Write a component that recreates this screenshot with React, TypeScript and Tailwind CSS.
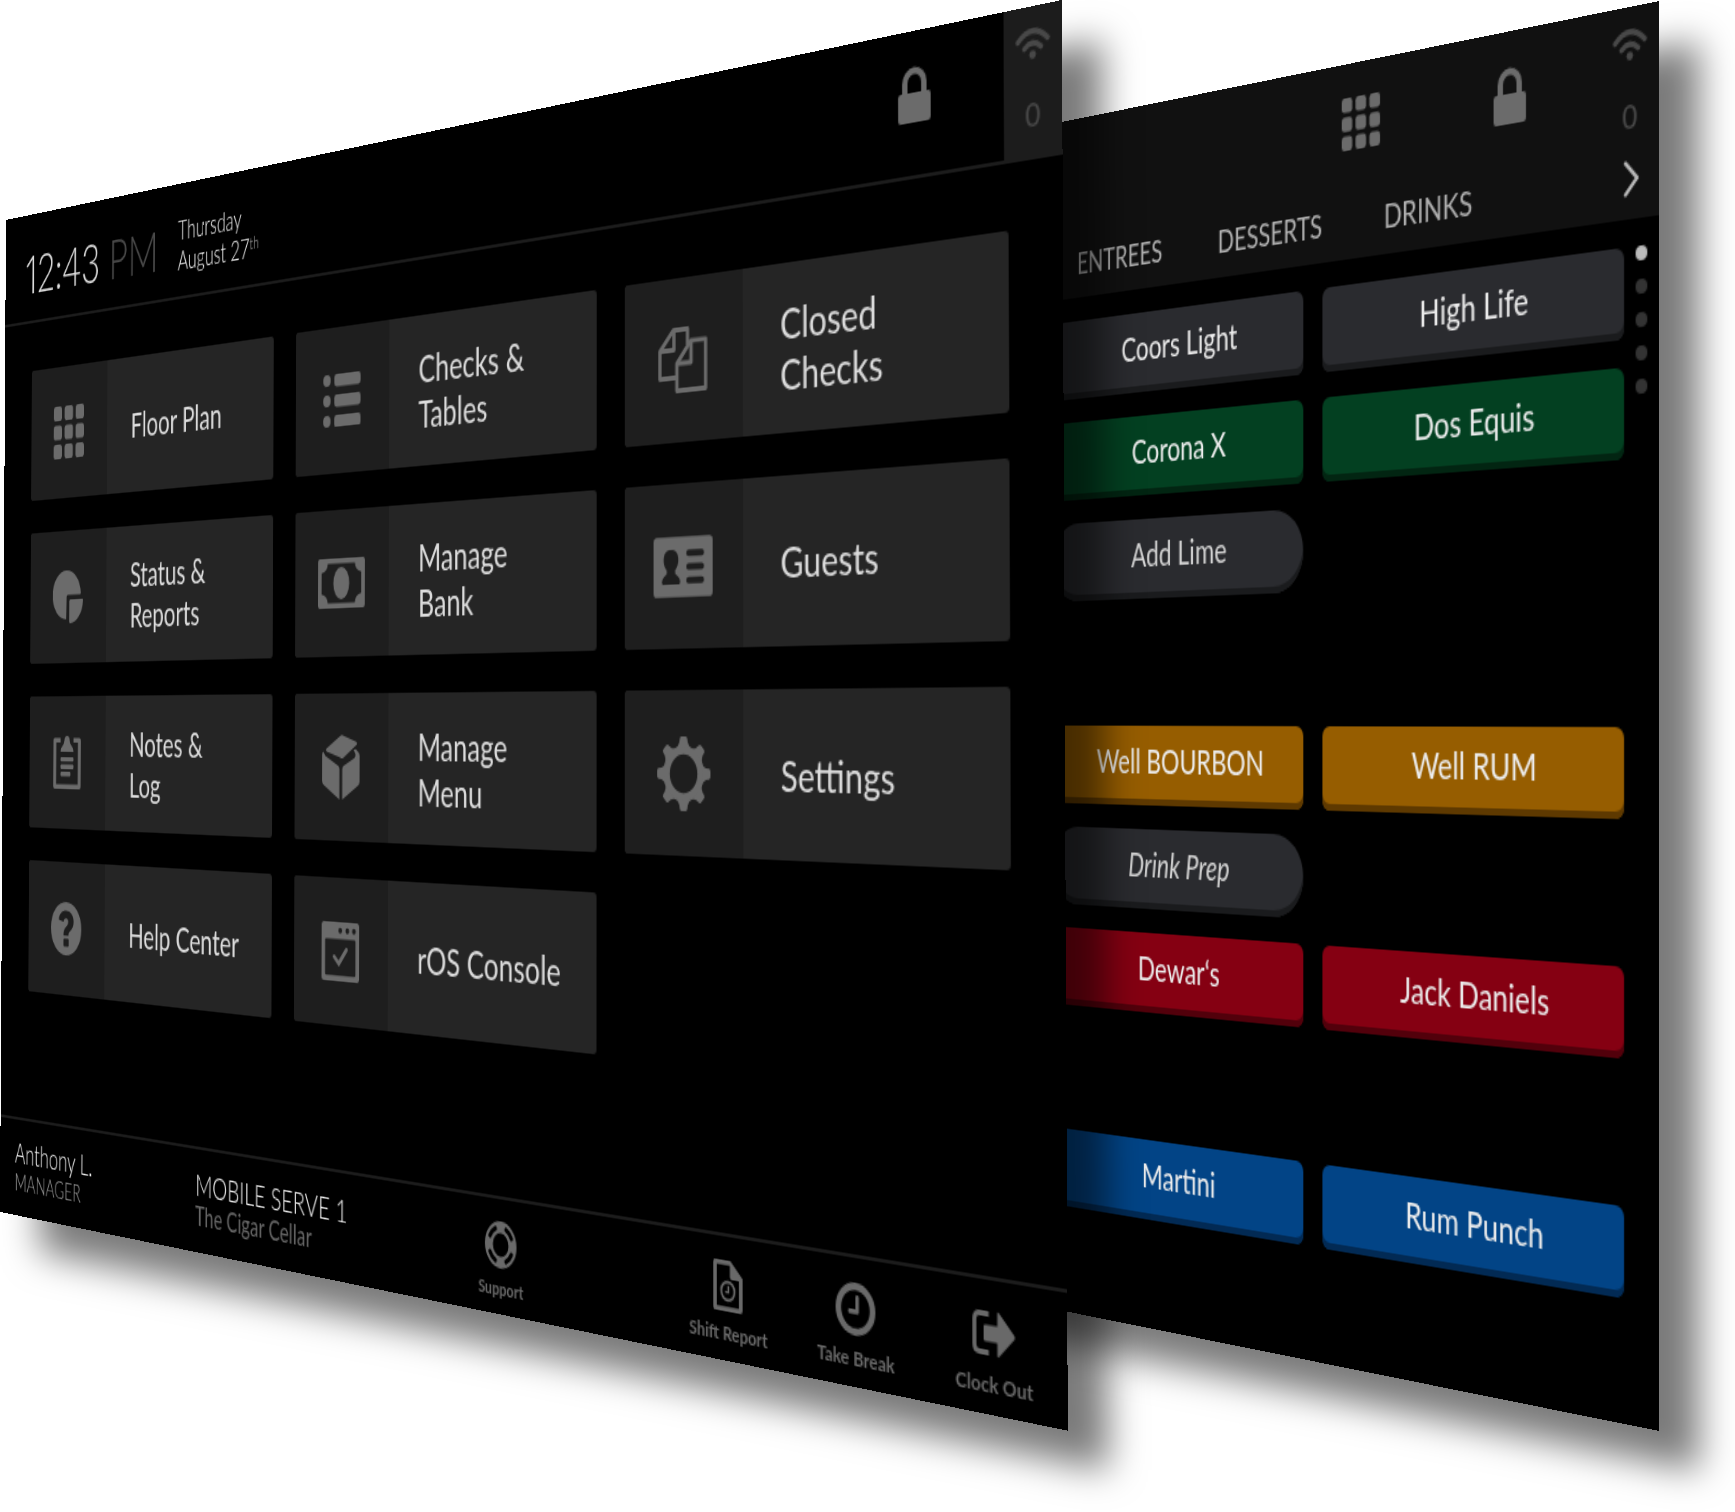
import { useEffect, useState } from "react";
import type { ReactNode } from "react";

type Point = [number, number];
type Quad = [Point, Point, Point, Point];

const DESIGN_WIDTH = 1735;
const PANEL_WIDTH = 1024;
const PANEL_HEIGHT = 768;

// Corners in the order: top left, top right, bottom right, bottom left.
const HOME_QUAD: Quad = [[6, 220], [1062, 0], [1068, 1431], [0, 1212]];
const MENU_QUAD: Quad = [[603, 215], [1659, 1], [1659, 1431], [603, 1218]];

/** Perspective matrix that maps a flat panel onto a quad on the page. */
function perspectiveMatrix(quad: Quad, scale: number): string {
  const [[x0, y0], [x1, y1], [x2, y2], [x3, y3]] = quad.map(([x, y]) => [x * scale, y * scale]);
  const dx1 = x1 - x2;
  const dx2 = x3 - x2;
  const dy1 = y1 - y2;
  const dy2 = y3 - y2;
  const sx = x0 - x1 + x2 - x3;
  const sy = y0 - y1 + y2 - y3;
  const den = dx1 * dy2 - dx2 * dy1;
  const g = (sx * dy2 - dx2 * sy) / den;
  const h = (dx1 * sy - sx * dy1) / den;
  const w = PANEL_WIDTH;
  const t = PANEL_HEIGHT;
  const m = [
    (x1 - x0 + g * x1) / w, (y1 - y0 + g * y1) / w, 0, g / w,
    (x3 - x0 + h * x3) / t, (y3 - y0 + h * y3) / t, 0, h / t,
    0, 0, 1, 0,
    x0, y0, 0, 1,
  ];
  return `matrix3d(${m.join(",")})`;
}

function usePageScale(): number {
  const [scale, setScale] = useState(() => window.innerWidth / DESIGN_WIDTH);
  useEffect(() => {
    const update = () => setScale(window.innerWidth / DESIGN_WIDTH);
    window.addEventListener("resize", update);
    return () => window.removeEventListener("resize", update);
  }, []);
  return scale;
}

/* ---------- icons ---------- */

function Icon({ w, h, className, children }: { w: number; h: number; className?: string; children: ReactNode }) {
  return (
    <svg width={w} height={h} viewBox={`0 0 ${w} ${h}`} fill="currentColor" aria-hidden="true" className={className}>
      {children}
    </svg>
  );
}

function GridIcon({ size = 40 }: { size?: number }) {
  return (
    <svg width={size} height={size} viewBox="0 0 40 40" fill="currentColor" aria-hidden="true">
      {[0, 14.5, 29].map((y) =>
        [0, 14.5, 29].map((x) => <rect key={`${x}-${y}`} x={x} y={y} width="11" height="11" rx="2.8" />),
      )}
    </svg>
  );
}

const ListIcon = () => (
  <Icon w={40} h={36}>
    {[0, 14, 28].map((y) => (
      <g key={y}>
        <circle cx="4" cy={y + 4} r="4" />
        <rect x="12" y={y} width="28" height="8.4" rx="2.4" />
      </g>
    ))}
  </Icon>
);

const CopyIcon = () => (
  <Icon w={42} h={40}>
    <g fill="none" stroke="currentColor" strokeWidth="2.8" strokeLinejoin="round">
      <path d="M15 30.5H1.5V13.5L13 1.5H25V11" />
      <path d="M13.5 1.5V13.5H1.5" />
      <path d="M16 22L28 8.8H40.2V38.5H16Z" />
      <path d="M28 8.8V22H16" />
    </g>
  </Icon>
);

const PieIcon = () => (
  <Icon w={40} h={40}>
    <path d="M18.5 0A18.5 18.5 0 1 0 18 37L18.5 20Q18.5 18.5 20 18.5H36Q37 18.5 36.9 17A18.5 18.5 0 0 0 18.5 0Z" />
    <path d="M23.5 22H39.5Q40 22 39.9 23.5A18 18 0 0 1 23.5 40Q22 40 22 39V23.5Q22 22 23.5 22Z" />
  </Icon>
);

const BanknoteIcon = () => (
  <Icon w={50} h={34}>
    <path
      fillRule="evenodd"
      d="M2 0H48Q50 0 50 2V32Q50 34 48 34H2Q0 34 0 32V2Q0 0 2 0ZM10.5 3.5Q10 9 3.8 9.8V24.2Q10 25 10.5 30.5H39.5Q40 25 46.2 24.2V9.8Q40 9 39.5 3.5Z"
    />
    <ellipse cx="25" cy="17" rx="8.5" ry="11" />
  </Icon>
);

const GuestIcon = () => (
  <svg width="50" height="37" viewBox="0 0 52 38" fill="currentColor" aria-hidden="true">
    <path
      fillRule="evenodd"
      d="M3 0H49Q52 0 52 3V35Q52 38 49 38H3Q0 38 0 35V3Q0 0 3 0Z
      M15.5 8C11.5 8 9 10.5 9 14.2C9 17.5 10.3 19.5 11.8 21V23C11.8 24 7.5 25 7.5 28.3C7.5 29.6 8.3 30 9.5 30H21.5C22.8 30 23.6 29.6 23.6 28.3C23.6 25 19.2 24 19.2 23V21C20.7 19.5 22 17.5 22 14.2C22 10.5 19.5 8 15.5 8Z
      M31 8.3H42.5Q44.5 8.3 44.5 10.4T42.5 12.5H31Q29 12.5 29 10.4T31 8.3Z
      M31 17H42.5Q44.5 17 44.5 19.1T42.5 21.2H31Q29 21.2 29 19.1T31 17Z
      M31 25.5H42.5Q44.5 25.5 44.5 27.6T42.5 29.7H31Q29 29.7 29 27.6T31 25.5Z"
    />
  </svg>
);

const ClipboardIcon = () => (
  <Icon w={36} h={40}>
    <path d="M9.5 1.5V5H3.8V36.5H32.2V5H26.5V1.5H34Q36 1.5 36 3.5V38Q36 40 34 40H2Q0 40 0 38V3.5Q0 1.5 2 1.5Z" />
    <path d="M18 0Q21.5 0 21.5 3.5Q22 7 24.5 8Q26.5 9 26.5 12H9.5Q9.5 9 11.5 8Q14 7 14.5 3.5Q14.5 0 18 0Z" />
    <rect x="9.5" y="16" width="17" height="3.2" rx="1" />
    <rect x="9.5" y="21.5" width="17" height="3.4" rx="1" />
    <rect x="9.5" y="27" width="13" height="3.4" rx="1" />
  </Icon>
);

const BoxIcon = () => (
  <Icon w={40} h={44}>
    <path d="M20 .5Q21.5 0 23 .7L36.5 4.8Q38 5.6 36.8 6.8L23 15.6Q21.2 16.6 19.4 15.6L4.8 11.6Q3 10.8 4.6 9.6Z" />
    <path d="M1.2 11.5L3.4 14.6L17 21Q18.6 21.8 18.6 23.6V44L2 34.6Q0 33.4 0 31.4V14Q0 12 1.2 11.5Z" />
    <path d="M33.4 10.3L36 9.7L39 12Q40 13 40 14.6V31.4Q40 33.4 38 34.6L21.6 44V23.6Q21.6 21.8 23.2 21L34 16Q36.6 14.4 35 12Z" />
  </Icon>
);

const GearIcon = () => (
  <svg width="45" height="45" viewBox="0 0 46 46" fill="currentColor" aria-hidden="true">
    {[0, 45, 90, 135, 180, 225, 270, 315].map((a) => (
      <path
        key={a}
        transform={`rotate(${a} 23 23)`}
        d="M19.8 1.2Q20.1 0 21.4 0H24.6Q25.9 0 26.2 1.2L26.7 3.8Q27.4 6.4 31 7.8H15Q18.6 6.4 19.3 3.8Z"
      />
    ))}
    <path fillRule="evenodd" d="M23 6.2A16.8 16.8 0 1 0 23 39.8A16.8 16.8 0 1 0 23 6.2ZM23 11.1A11.9 11.9 0 1 1 23 34.9A11.9 11.9 0 1 1 23 11.1Z" />
  </svg>
);

const HelpIcon = () => (
  <Icon w={40} h={40}>
    <path
      fillRule="evenodd"
      d="M20 0A20 20 0 1 0 20 40A20 20 0 1 0 20 0ZM10.4 13.6C10.8 9 14.6 6.4 20 6.4C25.8 6.4 29.8 9.6 29.8 14.4C29.8 17.8 28 19.8 25.6 21.4C23.8 22.6 23.2 23.4 23.2 25.2H16.6C16.4 21.8 17.8 20 20.2 18.4C22 17.2 22.8 16.4 22.8 14.8C22.8 13.2 21.8 12.2 20 12.2C18 12.2 16.8 13.2 16.6 15Z
      M17.6 27.4H22.6Q23.6 27.4 23.6 28.4V32.4Q23.6 33.4 22.6 33.4H17.6Q16.6 33.4 16.6 32.4V28.4Q16.6 27.4 17.6 27.4Z"
    />
  </Icon>
);

const ConsoleIcon = () => (
  <Icon w={40} h={40}>
    <path
      fillRule="evenodd"
      d="M2.5 0H37.5Q40 0 40 2.5V37.5Q40 40 37.5 40H2.5Q0 40 0 37.5V2.5Q0 0 2.5 0ZM5 11.4Q3.8 11.4 3.8 12.6V35Q3.8 36.2 5 36.2H35Q36.2 36.2 36.2 35V12.6Q36.2 11.4 35 11.4Z
      M20 3.8A2 2 0 1 0 20 7.8A2 2 0 1 0 20 3.8ZM27.5 3.8A2 2 0 1 0 27.5 7.8A2 2 0 1 0 27.5 3.8ZM34.5 3.8A2 2 0 1 0 34.5 7.8A2 2 0 1 0 34.5 3.8Z"
    />
    <path d="M13.5 23.5L18.5 28L26.5 18.5" fill="none" stroke="currentColor" strokeWidth="3" strokeLinecap="round" />
  </Icon>
);

const LockIcon = () => (
  <Icon w={24} h={32}>
    <path d="M3 15V9.5A9 9 0 0 1 21 9.5V15H22Q24 15 24 17V30Q24 32 22 32H2Q0 32 0 30V17Q0 15 2 15ZM7 15H17V9.5A5 5 0 0 0 7 9.5Z" fillRule="evenodd" />
  </Icon>
);

const WifiIcon = () => (
  <Icon w={24} h={17}>
    <g fill="none" stroke="currentColor" strokeLinecap="round" strokeWidth="3">
      <path d="M1.8 6.6Q12-3.2 22.2 6.6" />
      <path d="M6.2 10.8Q12 5.4 17.8 10.8" />
    </g>
    <circle cx="12" cy="14.6" r="2.3" />
  </Icon>
);

const ChevronIcon = () => (
  <Icon w={12} h={20}>
    <path d="M2 1.5L10 10L2 18.5" fill="none" stroke="currentColor" strokeWidth="2.2" strokeLinecap="round" strokeLinejoin="round" />
  </Icon>
);

const SupportIcon = () => (
  <Icon w={30} h={30}>
    <path
      fillRule="evenodd"
      d="M15 0A15 15 0 1 0 15 30A15 15 0 1 0 15 0ZM15 7.6A7.4 7.4 0 1 1 15 22.4A7.4 7.4 0 1 1 15 7.6Z"
    />
    <g className="text-black" fill="none" stroke="currentColor" strokeWidth="3" strokeLinecap="round">
      <path d="M20 4.8A11.4 11.4 0 0 1 25.2 10" />
      <path d="M25.2 20A11.4 11.4 0 0 1 20 25.2" />
      <path d="M10 25.2A11.4 11.4 0 0 1 4.8 20" />
      <path d="M4.8 10A11.4 11.4 0 0 1 10 4.8" />
    </g>
  </Icon>
);

const ShiftReportIcon = () => (
  <Icon w={24} h={30}>
    <path fillRule="evenodd" d="M2 0H14L24 9.5V28Q24 30 22 30H2Q0 30 0 28V2Q0 0 2 0ZM3 2.8V27.2H21V11H15Q13.6 11 13.6 9.6V2.8Z" />
    <circle cx="12" cy="18" r="5.4" fill="none" stroke="currentColor" strokeWidth="1.6" />
    <path d="M12.4 14.8V18.6H9.8" fill="none" stroke="currentColor" strokeWidth="1.4" />
  </Icon>
);

const ClockIcon = () => (
  <Icon w={30} h={30}>
    <circle cx="15" cy="15" r="12.9" fill="none" stroke="currentColor" strokeWidth="4.2" />
    <path d="M16.3 8.2V16.4H10.8" fill="none" stroke="currentColor" strokeWidth="2.6" strokeLinecap="round" strokeLinejoin="round" />
  </Icon>
);

const ClockOutIcon = () => (
  <Icon w={30} h={26}>
    <path d="M11.5 2.5H5Q1.5 2.5 1.5 6V20Q1.5 23.5 5 23.5H11.5" fill="none" stroke="currentColor" strokeWidth="2.8" />
    <path d="M8 9.5Q8 8.5 9 8.5H17.5V2Q17.5 0 19 1.4L29.3 12Q30 13 29.3 14L19 24.6Q17.5 26 17.5 24V17.5H9Q8 17.5 8 16.5Z" />
  </Icon>
);

/* ---------- home screen ---------- */

type Tile = { lines: string[]; icon: ReactNode };

const TILES: Tile[] = [
  { lines: ["Floor Plan"], icon: <GridIcon /> },
  { lines: ["Checks &", "Tables"], icon: <ListIcon /> },
  { lines: ["Closed", "Checks"], icon: <CopyIcon /> },
  { lines: ["Status &", "Reports"], icon: <PieIcon /> },
  { lines: ["Manage", "Bank"], icon: <BanknoteIcon /> },
  { lines: ["Guests"], icon: <GuestIcon /> },
  { lines: ["Notes &", "Log"], icon: <ClipboardIcon /> },
  { lines: ["Manage", "Menu"], icon: <BoxIcon /> },
  { lines: ["Settings"], icon: <GearIcon /> },
  { lines: ["Help Center"], icon: <HelpIcon /> },
  { lines: ["rOS Console"], icon: <ConsoleIcon /> },
];

function TileButton({ tile }: { tile: Tile }) {
  return (
    <button type="button" className="flex h-[100px] overflow-hidden rounded-[3px] bg-[#252525] text-left">
      <span className="flex w-[100px] shrink-0 items-center justify-center self-stretch bg-[#1e1e1e] text-[#6b6b6b]">
        {tile.icon}
      </span>
      <span className="flex flex-1 flex-col justify-center self-stretch pl-[30px] text-[25px] leading-[30px] text-[#dcdcdc]">
        {tile.lines.map((line) => (
          <span key={line} className="whitespace-nowrap">{line}</span>
        ))}
      </span>
    </button>
  );
}

function FooterAction({ label, icon }: { label: string; icon: ReactNode }) {
  return (
    <button type="button" className="flex w-[100px] flex-col items-center text-[#696969]">
      <span className="flex h-8 items-center">{icon}</span>
      <span className="mt-1 text-xs leading-4 font-bold whitespace-nowrap">{label}</span>
    </button>
  );
}

function HomeScreen() {
  return (
    <div className="flex h-full flex-col bg-black">
      <header className="flex h-[84px]">
        <div className="flex flex-1 items-center border-b-2 border-[#1c1c1c]">
          <div className="pt-2 pl-7 text-[42px] leading-none font-light whitespace-nowrap text-[#dddddd] proportional-nums">
            12:43 <span className="text-[#4a4a4a]">PM</span>
          </div>
          <div className="pt-2 pl-6 text-[19px] leading-[22px] font-light whitespace-nowrap text-[#eeeeee]">
            <p>Thursday</p>
            <p>
              August 27<sup className="text-xs text-[#aaaaaa]">th</sup>
            </p>
          </div>
          <button type="button" aria-label="Lock" className="mr-[52px] ml-auto -mt-[10px] text-[#6b6b6b]">
            <LockIcon />
          </button>
        </div>
        <div className="flex w-10 flex-col items-center bg-[#1c1c1c] pt-3 text-[#484848]">
          <WifiIcon />
          <span className="mt-5 text-lg leading-5 font-medium">0</span>
        </div>
      </header>

      <main className="grid flex-1 grid-cols-3 content-start gap-[25px] pt-[37px] pr-[37px] pl-[37px]">
        {TILES.map((tile) => (
          <TileButton key={tile.lines.join(" ")} tile={tile} />
        ))}
      </main>

      <footer className="flex h-[75px] items-start border-t-2 border-[#1c1c1c] pt-[13px] pl-5">
        <div className="w-[230px] whitespace-nowrap">
          <p className="text-[22px] leading-6 font-light text-[#eeeeee]">Anthony L.</p>
          <p className="text-lg leading-5 font-light text-[#999999]">MANAGER</p>
        </div>
        <div className="w-[274px] whitespace-nowrap">
          <p className="text-[22px] leading-6 font-light text-[#eeeeee]">MOBILE SERVE 1</p>
          <p className="text-[19px] leading-5 text-[#666666]">The Cigar Cellar</p>
        </div>
        <FooterAction label="Support" icon={<SupportIcon />} />
        <div className="ml-auto flex">
          <FooterAction label="Shift Report" icon={<ShiftReportIcon />} />
          <FooterAction label="Take Break" icon={<ClockIcon />} />
          <FooterAction label="Clock Out" icon={<ClockOutIcon />} />
        </div>
      </footer>
    </div>
  );
}

/* ---------- menu screen ---------- */

// Face colour plus the darker lip along the bottom edge of a button.
const TONES = {
  slate: "bg-[#2a2b2f] shadow-[inset_0_-4px_0_#1a1b1d]",
  green: "bg-[#034021] shadow-[inset_0_-4px_0_#022512]",
  amber: "bg-[#965d00] shadow-[inset_0_-4px_0_#5e3900]",
  red: "bg-[#850012] shadow-[inset_0_-4px_0_#52000b]",
  blue: "bg-[#024486] shadow-[inset_0_-4px_0_#022a54]",
};

type MenuItem = { label: string; tone: keyof typeof TONES; pill?: boolean; italic?: boolean } | null;

const MENU: MenuItem[] = [
  { label: "Coors Light", tone: "slate" },
  { label: "High Life", tone: "slate" },
  { label: "Corona X", tone: "green" },
  { label: "Dos Equis", tone: "green" },
  { label: "Add Lime", tone: "slate", pill: true },
  null,
  null,
  null,
  { label: "Well BOURBON", tone: "amber" },
  { label: "Well RUM", tone: "amber" },
  { label: "Drink Prep", tone: "slate", pill: true, italic: true },
  null,
  { label: "Dewar‘s", tone: "red" },
  { label: "Jack Daniels", tone: "red" },
  null,
  null,
  { label: "Martini", tone: "blue" },
  { label: "Rum Punch", tone: "blue" },
];

function MenuButton({ item }: { item: MenuItem }) {
  if (!item) return <div />;
  const shape = item.pill ? "rounded-full text-[#d4d4d4]" : "rounded-md text-[#ececec]";
  const slant = item.italic ? "italic" : "";
  return (
    <button
      type="button"
      className={`flex h-[50px] items-center justify-center pb-[6px] pl-[10px] text-[21px] leading-6 whitespace-nowrap ${TONES[item.tone]} ${shape} ${slant}`}
    >
      {item.label}
    </button>
  );
}

function MenuScreen() {
  return (
    <div className="flex h-full flex-col bg-black">
      <header className="flex h-[115px] justify-end bg-[#111111]">
        <div className="flex flex-col items-end">
          <div className="flex h-[71px] items-center gap-[88px] pr-[54px] text-[#6b6b6b]">
            <button type="button" aria-label="All categories">
              <GridIcon size={31} />
            </button>
            <button type="button" aria-label="Lock">
              <LockIcon />
            </button>
          </div>
          <nav className="flex gap-[50px] pt-[10px] pr-[94px] text-[19px] leading-6 text-[#b0b0b0]">
            <a href="#entrees">ENTREES</a>
            <a href="#desserts">DESSERTS</a>
            <a href="#drinks">DRINKS</a>
          </nav>
        </div>
        <div className="flex w-10 flex-col items-center pt-3 text-[#484848]">
          <WifiIcon />
          <span className="mt-5 text-lg leading-5 font-medium">0</span>
          <button type="button" aria-label="Next categories" className="mt-[14px] ml-[2px] text-[#bbbbbb]">
            <ChevronIcon />
          </button>
        </div>
      </header>

      <main className="flex justify-end pt-[15px]">
        <div className="grid auto-rows-[50px] grid-cols-[229px_229px] gap-x-4 gap-y-[15px]">
          {MENU.map((item, i) => (
            <MenuButton key={i} item={item} />
          ))}
        </div>
        <div className="flex w-6 flex-col items-center gap-[10px]">
          {[0, 1, 2, 3, 4].map((i) => (
            <span key={i} className={`size-2 rounded-full ${i === 0 ? "bg-[#bbbbbb]" : "bg-[#333333]"}`} />
          ))}
        </div>
      </main>
    </div>
  );
}

/* ---------- page ---------- */

function TiltedPanel({ quad, scale, children }: { quad: Quad; scale: number; children: ReactNode }) {
  return (
    <div className="[grid-area:1/1] drop-shadow-[40px_40px_18px_rgba(0,0,0,0.52)]">
      <section className="h-[768px] w-[1024px] origin-top-left" style={{ transform: perspectiveMatrix(quad, scale) }}>
        {children}
      </section>
    </div>
  );
}

export default function App() {
  const scale = usePageScale();
  return (
    <div className="grid min-h-screen overflow-hidden bg-white font-['Lato',sans-serif]">
      <TiltedPanel quad={MENU_QUAD} scale={scale}>
        <MenuScreen />
      </TiltedPanel>
      <TiltedPanel quad={HOME_QUAD} scale={scale}>
        <HomeScreen />
      </TiltedPanel>
    </div>
  );
}
